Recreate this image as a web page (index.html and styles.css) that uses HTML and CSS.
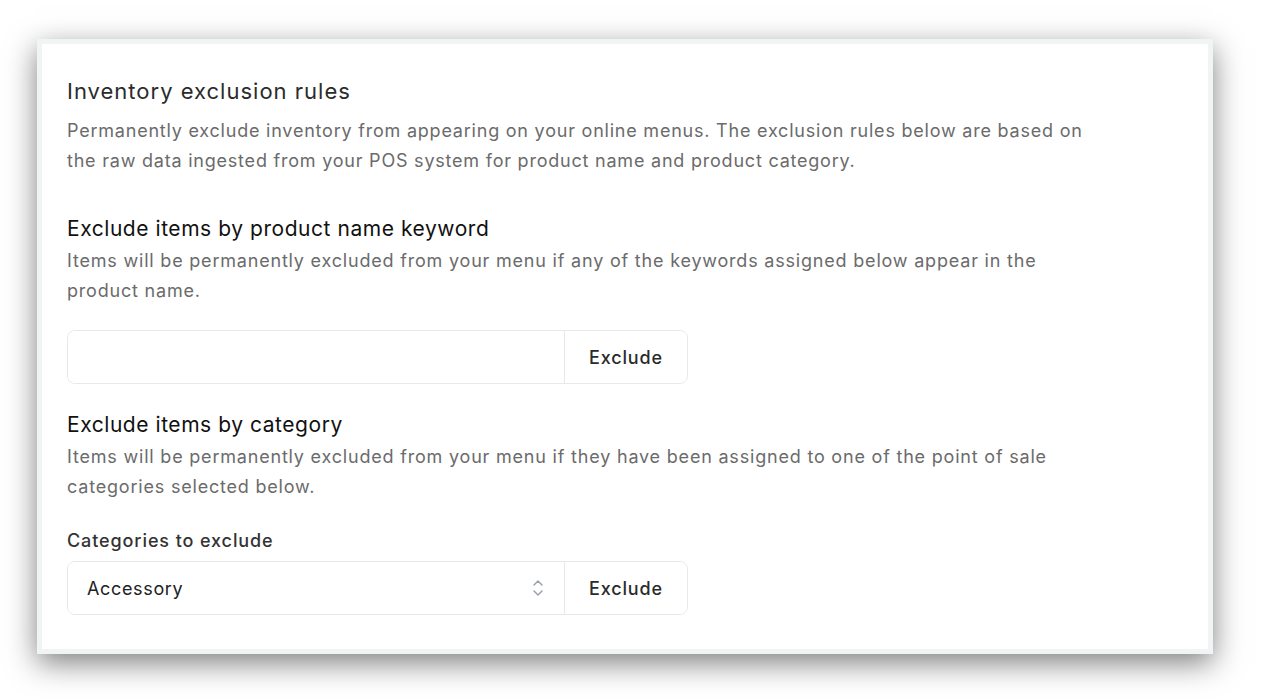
FILE: index.html
```html
<!DOCTYPE html>
<html lang="en">
<head>
<meta charset="UTF-8">
<title>Inventory exclusion rules</title>
<link rel="stylesheet" href="styles.css">
</head>
<body>
	<div class="page">
		<div class="card">
			<h2 class="title">Inventory exclusion rules</h2>
			<p class="lead">Permanently exclude inventory from appearing on your online menus. The exclusion rules below are based on the raw data ingested from your POS system for product name and product category.</p>

			<h3 class="sub first">Exclude items by product name keyword</h3>
			<p class="desc">Items will be permanently excluded from your menu if any of the keywords assigned below appear in the product name.</p>
			<div class="row keyword">
				<input type="text" class="field" value="">
				<button class="btn">Exclude</button>
			</div>

			<h3 class="sub">Exclude items by category</h3>
			<p class="desc">Items will be permanently excluded from your menu if they have been assigned to one of the point of sale categories selected below.</p>
			<div class="label">Categories to exclude</div>
			<div class="row category">
				<div class="field select">
					<span>Accessory</span>
					<svg width="12" height="18" viewBox="0 0 12 18" fill="none" stroke="#9aa1ad" stroke-width="1.5" stroke-linecap="round" stroke-linejoin="round">
						<path d="M2 6 L6 2 L10 6"/>
						<path d="M2 12 L6 16 L10 12"/>
					</svg>
				</div>
				<button class="btn">Exclude</button>
			</div>
		</div>
	</div>
</body>
</html>
```
FILE: styles.css
```css
html,body{
	margin:0;
	background:#fff;
}
body{
	font-family:"Inter","Liberation Sans",sans-serif;
}
.page{
	padding:39px 0 44px 37px;
}
.card{
	width:1166px;
	height:605px;
	box-sizing:content-box;
	border:5px solid #f1f4f4;
	background:#fff;
	box-shadow:0 9px 28px rgba(0,0,0,0.5);
	padding:0;
}
.card > *{
	margin-left:25px;
}
.title{
	margin-top:32px;
	margin-bottom:0;
	font-size:22px;
	line-height:30px;
	font-weight:400;
	letter-spacing:1px;
	color:#2b2b2b;
}
.lead{
	margin-top:10px;
	margin-bottom:0;
	width:1040px;
	font-size:18px;
	line-height:30px;
	letter-spacing:0.78px;
	color:#6b6b6b;
}
.sub{
	margin:26px 0 0 25px;
	font-size:21px;
	line-height:30px;
	font-weight:400;
	letter-spacing:0.55px;
	color:#111;
}
.sub.first{
	margin-top:38px;
}
.desc{
	margin-top:2px;
	margin-bottom:0;
	width:1000px;
	font-size:18px;
	line-height:30px;
	letter-spacing:0.8px;
	color:#6b6b6b;
}
.row{
	display:flex;
	width:621px;
	height:54px;
	box-sizing:border-box;
	border:1px solid #e6e8ea;
	border-radius:8px;
	overflow:hidden;
}
.row.keyword{
	margin-top:24px;
}
.field{
	flex:1;
	border:0;
	outline:none;
	font:inherit;
	font-size:18px;
	letter-spacing:0.65px;
	padding:0 19px;
	background:#fff;
	color:#222;
}
.select{
	display:flex;
	align-items:center;
	justify-content:space-between;
	padding-right:20px;
}
.btn{
	width:123px;
	border:0;
	border-left:1px solid #e6e8ea;
	background:#fff;
	font-family:inherit;
	font-size:18px;
	font-weight:500;
	letter-spacing:0.85px;
	color:#2b2b2b;
	padding:0;
}
.label{
	margin-top:27px;
	font-size:18px;
	line-height:24px;
	font-weight:500;
	letter-spacing:0.9px;
	color:#333;
}
.row.category{
	margin-top:8px;
}
```
